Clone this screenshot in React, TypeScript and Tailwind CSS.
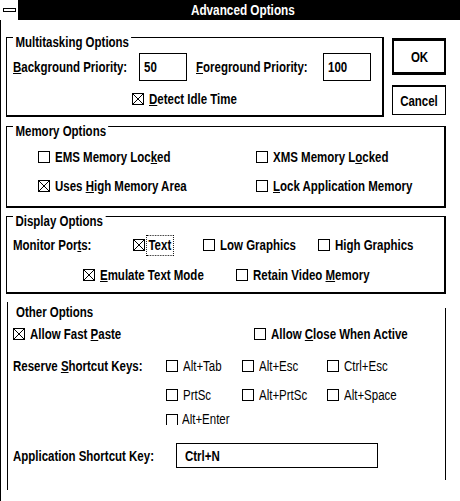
import React from "react";

const F = "font-['Liberation_Sans',Arial,sans-serif]";

function T({ children, c = "" }: { children: React.ReactNode; c?: string }) {
  return <span className={"inline-block origin-left scale-x-[0.82] whitespace-nowrap " + c}>{children}</span>;
}

function Box({ checked }: { checked?: boolean }) {
  return (
    <svg width="12" height="12" viewBox="0 0 12 12" className="shrink-0 block">
      <rect x="0.5" y="0.5" width="11" height="11" fill="white" stroke="black" strokeWidth="1" shapeRendering="crispEdges" />
      {checked && <path d="M1 1L11 11M11 1L1 11" stroke="black" strokeWidth="1" />}
    </svg>
  );
}

function Check({ checked, children, className = "", labelClass = "" }: { checked?: boolean; children: React.ReactNode; className?: string; labelClass?: string }) {
  return (
    <div className={"flex items-center " + className}>
      <Box checked={checked} />
      <span className={"ml-[5px] " + labelClass}><T>{children}</T></span>
    </div>
  );
}

function GroupTitle({ children }: { children: React.ReactNode }) {
  return (
    <span className="absolute left-[6px] top-[-4px] px-[3px] bg-white leading-[16px] whitespace-nowrap origin-left scale-x-[0.82]">{children}</span>
  );
}

export default function App() {
  return (
    <div className={`w-[460px] h-[501px] bg-white text-black overflow-hidden flex flex-col ${F} text-[14px] font-bold leading-[16px]`}>
      {/* title bar */}
      <div className="h-[20px] bg-black flex shrink-0">
        <div className="w-[18px] h-[20px] bg-white flex items-center justify-center">
          <div className="w-[13px] h-[4px] border border-black bg-white" />
        </div>
        <div className="flex-1 flex items-center justify-center pl-[8px] text-white">
          <span className="inline-block scale-x-[0.84] whitespace-nowrap">Advanced Options</span>
        </div>
      </div>

      <div className="flex-1 border-l border-black flex flex-col">
        {/* Row 1 */}
        <div className="flex mt-[17px]">
          <div className="relative ml-[5px] w-[378px] h-[80px] border-l border-t border-r-2 border-b-2 border-black flex flex-col">
            <GroupTitle>Multitasking Options</GroupTitle>
            <div className="flex items-center h-[28px] mt-[15px]">
              <span className="ml-[6px] w-[126px]"><T><u>B</u>ackground Priority:</T></span>
              <div className="w-[48px] h-[28px] border border-black flex items-center pl-[4px]"><T>50</T></div>
              <span className="ml-[9px] w-[127px]"><T><u>F</u>oreground Priority:</T></span>
              <div className="w-[48px] h-[28px] border border-black flex items-center pl-[4px]"><T>100</T></div>
            </div>
            <div className="flex items-center h-[12px] mt-[12px] ml-[125px]">
              <Check checked><u>D</u>etect Idle Time</Check>
            </div>
          </div>
          <div className="ml-[8px] mt-[1px] flex flex-col">
            <div className="w-[54px] h-[37px] border-2 border-t-[3px] border-b-[3px] border-black flex items-center justify-center">
              <span className="inline-block scale-x-[0.82]">OK</span>
            </div>
            <div className="w-[54px] h-[30px] mt-[10px] border border-t-2 border-black flex items-center justify-center">
              <span className="inline-block scale-x-[0.82]">Cancel</span>
            </div>
          </div>
        </div>

        {/* Memory Options */}
        <div className="relative mt-[9px] ml-[5px] w-[440px] h-[82px] border-l border-t border-r-2 border-b-2 border-black flex flex-col">
          <GroupTitle>Memory Options</GroupTitle>
          <div className="flex items-center h-[16px] mt-[22px] ml-[31px]">
            <Check className="w-[218px]">EMS Memory Loc<u>k</u>ed</Check>
            <Check>XMS Memory L<u>o</u>cked</Check>
          </div>
          <div className="flex items-center h-[16px] mt-[13px] ml-[31px]">
            <Check checked className="w-[218px]">Uses <u>H</u>igh Memory Area</Check>
            <Check><u>L</u>ock Application Memory</Check>
          </div>
        </div>

        {/* Display Options */}
        <div className="relative mt-[8px] ml-[5px] w-[440px] h-[78px] border-l border-t border-r-2 border-b-2 border-black flex flex-col">
          <GroupTitle>Display Options</GroupTitle>
          <div className="flex items-center h-[20px] mt-[18px]">
            <span className="ml-[6px] w-[120px]"><T>Monitor Por<u>t</u>s:</T></span>
            <div className="flex items-center w-[70px]">
              <Box checked />
              <span className="ml-[1px] h-[21px] px-[2px] border border-dotted border-black flex items-center origin-left scale-x-[0.82] whitespace-nowrap">Text</span>
            </div>
            <Check className="w-[115px]">Low Graphics</Check>
            <Check>High Graphics</Check>
          </div>
          <div className="flex items-center h-[16px] mt-[12px] ml-[76px]">
            <Check checked className="w-[153px]"><u>E</u>mulate Text Mode</Check>
            <Check>Retain Video <u>M</u>emory</Check>
          </div>
        </div>

        {/* Other Options */}
        <div className="mt-[8px] ml-[6px] w-[439px] h-[188px] border-l border-black flex">
          <div className="flex-1 flex flex-col">
            <div className="h-[14px] mt-[3px] ml-[8px] flex items-center"><T>Other Options</T></div>
            <div className="flex items-center h-[14px] mt-[8px] ml-[5px]">
              <Check checked className="w-[241px]" labelClass="ml-[4px]">Allow Fast <u>P</u>aste</Check>
              <Check labelClass="ml-[4px]">Allow <u>C</u>lose When Active</Check>
            </div>
            <div className="flex items-center h-[14px] mt-[18px] ml-[5px]">
              <span className="w-[153px]"><T>Reserve <u>S</u>hortcut Keys:</T></span>
              <Check className="w-[76px]" labelClass="font-normal ml-[4px]">Alt+Tab</Check>
              <Check className="w-[85px]" labelClass="font-normal ml-[4px]">Alt+Esc</Check>
              <Check labelClass="font-normal ml-[4px]">Ctrl+Esc</Check>
            </div>
            <div className="flex items-center h-[14px] mt-[15px] ml-[158px]">
              <Check className="w-[76px]" labelClass="font-normal ml-[4px]">PrtSc</Check>
              <Check className="w-[85px]" labelClass="font-normal ml-[4px]">Alt+PrtSc</Check>
              <Check labelClass="font-normal ml-[4px]">Alt+Space</Check>
            </div>
            <div className="flex items-start h-[11px] mt-[12px] ml-[158px] overflow-hidden">
              <Box />
              <span className="ml-[4px] -mt-[3px] font-normal"><T>Alt+Enter</T></span>
            </div>
            <div className="flex items-center h-[25px] mt-[18px] ml-[5px]">
              <span className="w-[163px]"><T>Application Shortcut Key:</T></span>
              <div className="w-[202px] h-[25px] border border-black flex items-center pl-[8px]"><T>Ctrl+N</T></div>
            </div>
          </div>
          <div className="w-[1px] bg-black mt-[6px] mb-[10px]" />
        </div>
      </div>
    </div>
  );
}
